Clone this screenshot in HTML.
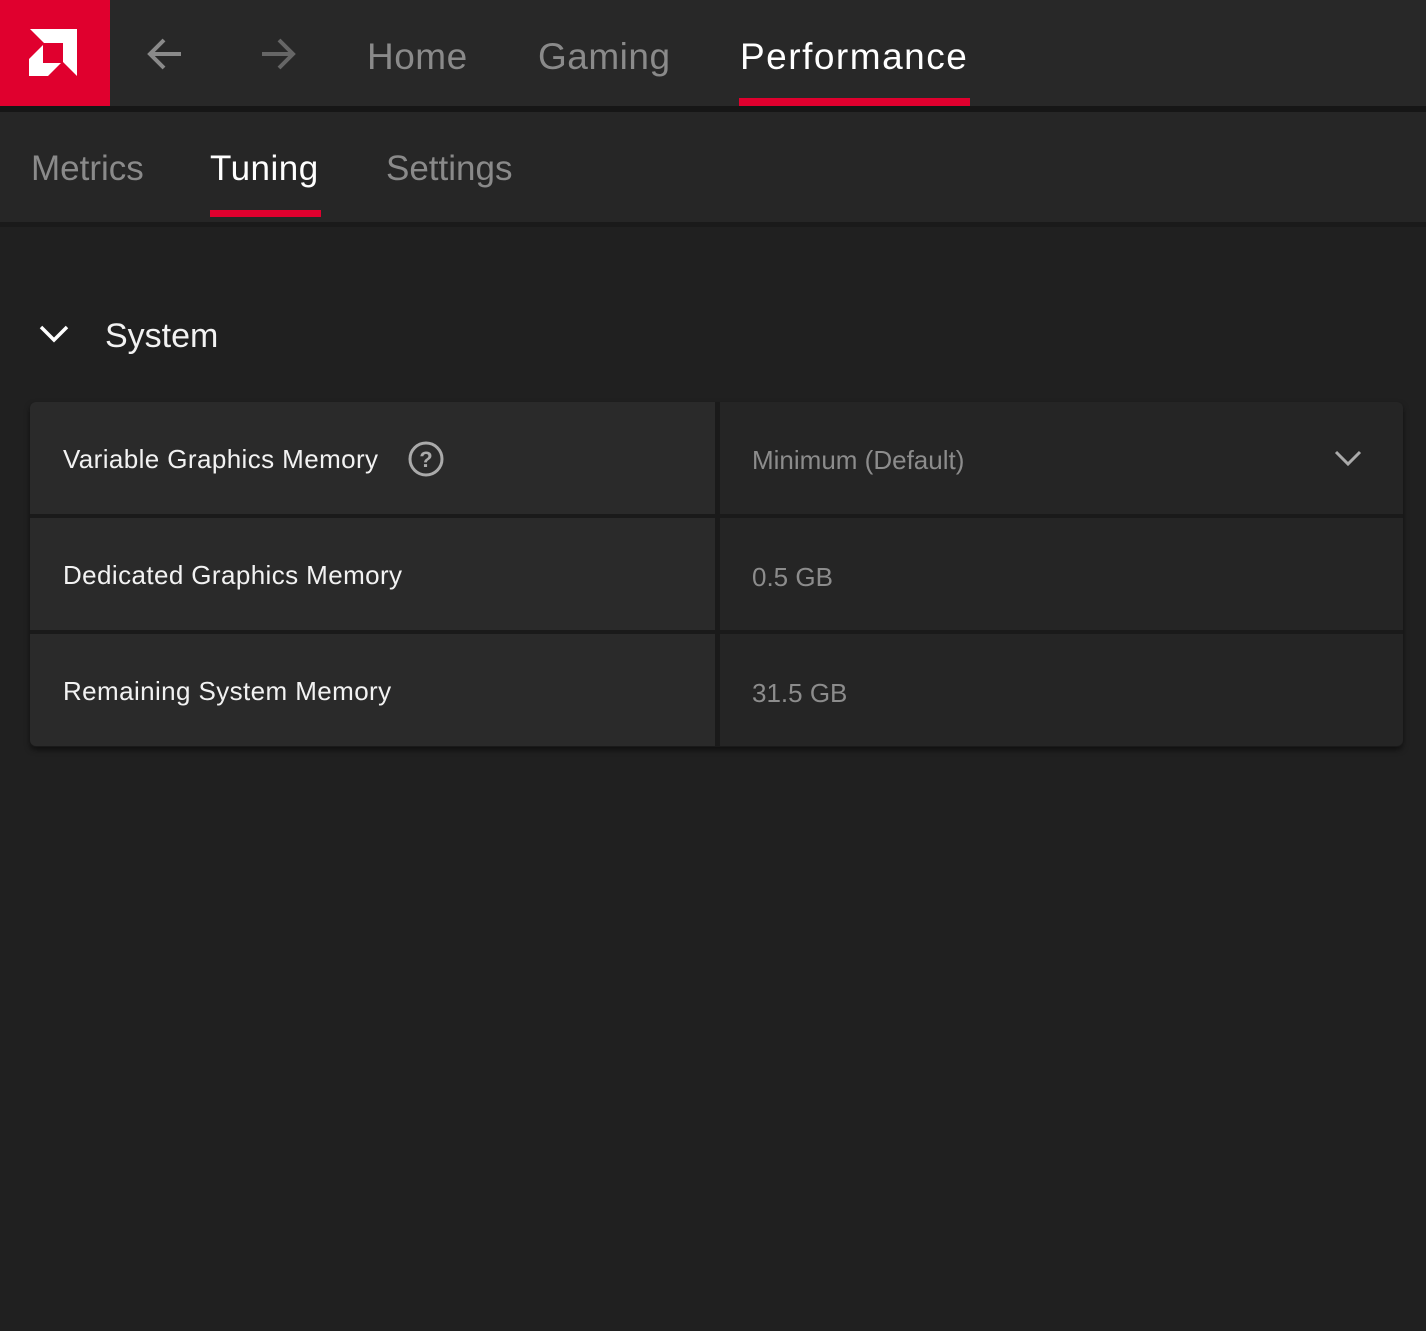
<!DOCTYPE html>
<html><head><meta charset="utf-8"><style>
*{margin:0;padding:0;box-sizing:border-box}
body{width:1426px;height:1331px;background:#202020;font-family:"Liberation Sans",sans-serif;position:relative;overflow:hidden}
.top{position:absolute;left:0;top:0;width:1426px;height:106px;background:#282828}
.logo{position:absolute;left:0;top:0;width:110px;height:106px;background:#e0002e}
.shadow{position:absolute;left:0;top:106px;width:1426px;height:6px;background:#161616}
.sub{position:absolute;left:0;top:112px;width:1426px;height:110px;background:#262626}
.sub2{position:absolute;left:0;top:222px;width:1426px;height:5px;background:#1a1a1a}
.t{position:absolute;white-space:nowrap}
.nav{font-size:37px;top:36px;color:#8a8a8a}
.subn{font-size:35px;top:149px;color:#8a8a8a}
.ul{position:absolute;height:7px;background:#e0002e}
.cell{position:absolute;background:#2a2a2a}
.rc{position:absolute;background:#252525}
.lab{font-size:26px;color:#f2f2f2;left:63px;letter-spacing:0.4px}
.val{font-size:26px;color:#8c8c8c;left:752px}
</style></head><body>
<div class="top"></div>
<div class="logo"><svg width="110" height="106"><polygon fill="#fff" points="30,29 77,29 77,76 63,62 63,43 44,43"/><polygon fill="#fff" points="29,59 43,45 43,63 61,63 48,76 29,76"/></svg></div>
<svg class="t" style="left:144px;top:34px" width="40" height="40"><path d="M37 20H6M20 6L6 20l14 14" stroke="#8a8a8a" stroke-width="4" fill="none"/></svg>
<svg class="t" style="left:259px;top:34px" width="40" height="40"><path d="M3 20h31M20 6l14 14-14 14" stroke="#666" stroke-width="4" fill="none"/></svg>
<div class="t nav" style="left:367px;letter-spacing:0.5px">Home</div>
<div class="t nav" style="left:538px;letter-spacing:0.5px">Gaming</div>
<div class="t nav" style="left:740px;color:#fff;letter-spacing:1.5px">Performance</div>
<div class="ul" style="left:739px;top:98px;width:231px;height:8px"></div>
<div class="shadow"></div>
<div class="sub"></div><div class="sub2"></div>
<div class="t subn" style="left:31px">Metrics</div>
<div class="t subn" style="left:210px;color:#fff;letter-spacing:0.5px">Tuning</div>
<div class="t subn" style="left:386px">Settings</div>
<div class="ul" style="left:210px;top:210px;width:111px"></div>
<svg class="t" style="left:38px;top:322px" width="32" height="24"><path d="M3 5l13 13L29 5" stroke="#fff" stroke-width="3.5" fill="none"/></svg>
<div class="t" style="left:105px;top:317px;font-size:34px;color:#f2f2f2">System</div>
<div style="position:absolute;left:30px;top:402px;width:1373px;height:345px;background:#1a1a1a;border-radius:6px;box-shadow:0 3px 6px rgba(0,0,0,.5)"></div>
<div class="cell" style="left:30px;top:402px;width:685px;height:112px;border-top-left-radius:6px"></div>
<div class="rc" style="left:720px;top:402px;width:683px;height:112px;border-top-right-radius:6px"></div>
<div class="cell" style="left:30px;top:518px;width:685px;height:112px"></div>
<div class="rc" style="left:720px;top:518px;width:683px;height:112px"></div>
<div class="cell" style="left:30px;top:634px;width:685px;height:112px;border-bottom-left-radius:6px"></div>
<div class="rc" style="left:720px;top:634px;width:683px;height:112px;border-bottom-right-radius:6px"></div>
<div class="t lab" style="top:444px">Variable Graphics Memory</div>
<svg class="t" style="left:406px;top:440px" width="40" height="40"><circle cx="20" cy="19" r="16" stroke="#aaa" stroke-width="3" fill="none"/><text x="20" y="27" font-size="22" font-weight="bold" fill="#aaa" text-anchor="middle" font-family="Liberation Sans">?</text></svg>
<div class="t lab" style="top:560px">Dedicated Graphics Memory</div>
<div class="t lab" style="top:676px">Remaining System Memory</div>
<div class="t val" style="top:445px">Minimum (Default)</div>
<svg class="t" style="left:1333px;top:448px" width="30" height="20"><path d="M3 4l12 12L27 4" stroke="#aaa" stroke-width="3" fill="none"/></svg>
<div class="t val" style="top:562px">0.5 GB</div>
<div class="t val" style="top:678px">31.5 GB</div>
</body></html>
